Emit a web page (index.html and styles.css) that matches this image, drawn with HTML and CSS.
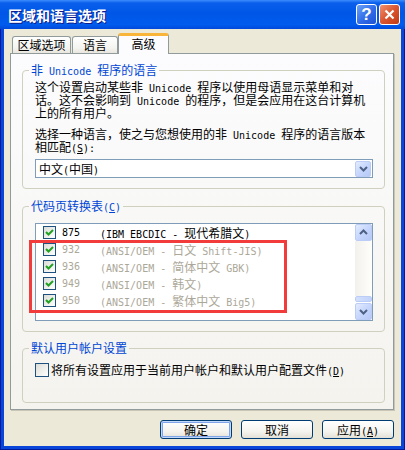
FILE: index.html
```html
<!DOCTYPE html>
<html lang="zh-CN">
<head>
    <meta charset="UTF-8">
    <title>区域和语言选项</title>
    <link rel="stylesheet" href="styles.css">
</head>
<body>
<div class="window">
    <div class="titlebar">
        <span class="title">区域和语言选项</span>
        <div class="cap_btns">
            <span class="cap_btn help">?</span>
            <span class="cap_btn close">
                <svg width="13" height="13" viewBox="0 0 13 13"><path d="M2.5 2.5 L10.5 10.5 M10.5 2.5 L2.5 10.5" stroke="#fff" stroke-width="2.2" fill="none"/></svg>
            </span>
        </div>
    </div>
    <div class="client">
        <div class="tabs">
            <div class="tab tab1">区域选项</div>
            <div class="tab tab2">语言</div>
            <div class="tab active">高级</div>
        </div>
        <div class="panel">
            <fieldset class="group g1">
                <legend>非<span class="en"> Unicode </span>程序的语言</legend>
                <div class="gbody">
                    <p class="desc">这个设置启动某些非<span class="en"> Unicode </span>程序以使用母语显示菜单和对<br>话。这不会影响到<span class="en"> Unicode </span>的程序，但是会应用在这台计算机<br>上的所有用户。</p>
                    <p class="desc">选择一种语言，使之与您想使用的非<span class="en"> Unicode </span>程序的语言版本<br>相匹配<span class="en">(<u>S</u>):</span></p>
                    <div class="combo">
                        <span>中文<span class="en">(</span>中国<span class="en">)</span></span>
                        <span class="combo_btn">
                            <svg width="13" height="13" viewBox="0 0 13 13"><path d="M3 5 L6.5 8.5 L10 5" stroke="#4D6185" stroke-width="2" fill="none"/></svg>
                        </span>
                    </div>
                </div>
            </fieldset>
            <fieldset class="group g2">
                <legend>代码页转换表<span class="en">(<u>C</u>)</span></legend>
                <div class="gbody">
                    <div class="listbox">
                        <div class="rows">
                            <div class="row">
                                <span class="chk"><svg width="11" height="11" viewBox="0 0 11 11"><polyline points="2,5 4.5,7.5 9,3" stroke="#21A121" stroke-width="2" fill="none"/></svg></span>
                                <span class="en num">875</span>
                                <span><span class="en">(IBM EBCDIC - </span>现代希腊文<span class="en">)</span></span>
                            </div>
                            <div class="row off">
                                <span class="chk"><svg width="11" height="11" viewBox="0 0 11 11"><polyline points="2,5 4.5,7.5 9,3" stroke="#21A121" stroke-width="2" fill="none"/></svg></span>
                                <span class="en num">932</span>
                                <span><span class="en">(ANSI/OEM - </span>日文<span class="en"> Shift-JIS)</span></span>
                            </div>
                            <div class="row off">
                                <span class="chk"><svg width="11" height="11" viewBox="0 0 11 11"><polyline points="2,5 4.5,7.5 9,3" stroke="#21A121" stroke-width="2" fill="none"/></svg></span>
                                <span class="en num">936</span>
                                <span><span class="en">(ANSI/OEM - </span>简体中文<span class="en"> GBK)</span></span>
                            </div>
                            <div class="row off">
                                <span class="chk"><svg width="11" height="11" viewBox="0 0 11 11"><polyline points="2,5 4.5,7.5 9,3" stroke="#21A121" stroke-width="2" fill="none"/></svg></span>
                                <span class="en num">949</span>
                                <span><span class="en">(ANSI/OEM - </span>韩文<span class="en">)</span></span>
                            </div>
                            <div class="row off">
                                <span class="chk"><svg width="11" height="11" viewBox="0 0 11 11"><polyline points="2,5 4.5,7.5 9,3" stroke="#21A121" stroke-width="2" fill="none"/></svg></span>
                                <span class="en num">950</span>
                                <span><span class="en">(ANSI/OEM - </span>繁体中文<span class="en"> Big5)</span></span>
                            </div>
                        </div>
                        <div class="scrollbar">
                            <span class="sb_btn">
                                <svg width="13" height="13" viewBox="0 0 13 13"><path d="M3 8 L6.5 4.5 L10 8" stroke="#4D6185" stroke-width="2" fill="none"/></svg>
                            </span>
                            <span class="sb_track"></span>
                            <span class="sb_thumb"></span>
                            <span class="sb_btn">
                                <svg width="13" height="13" viewBox="0 0 13 13"><path d="M3 5 L6.5 8.5 L10 5" stroke="#4D6185" stroke-width="2" fill="none"/></svg>
                            </span>
                        </div>
                    </div>
                </div>
            </fieldset>
            <fieldset class="group g3">
                <legend>默认用户帐户设置</legend>
                <div class="gbody">
                    <div class="opt">
                        <span class="chk empty"></span>
                        <span>将所有设置应用于当前用户帐户和默认用户配置文件<span class="en">(<u>D</u>)</span></span>
                    </div>
                </div>
            </fieldset>
        </div>
        <div class="actions">
            <span class="btn default">确定</span>
            <span class="btn">取消</span>
            <span class="btn">应用<span class="en">(<u>A</u>)</span></span>
        </div>
    </div>
    <div class="mark"></div>
</div>
</body>
</html>
```

FILE: styles.css
```css
*{margin: 0;padding: 0;box-sizing: border-box}
body{
    width: 405px;
    height: 450px;
    overflow: hidden;
    font-family: "Noto Sans CJK SC", "Noto Sans", sans-serif;
    font-size: 12px;
    color: #000;
}
.en{
    font-family: "DejaVu Sans Mono", "Liberation Mono", monospace;
    font-size: 10px;
    line-height: 1;
}
.window{
    position: relative;
    width: 405px;
    height: 450px;
    display: flex;
    flex-direction: column;
    background: #0A45D9;
    box-shadow: inset 1px 0 0 #001A9C, inset -1px 0 0 #001A9C, inset 0 -1px 0 #001A9C;
}
    .titlebar{
        height: 29px;
        display: flex;
        align-items: center;
        justify-content: space-between;
        padding: 0 5px 0 8px;
        background: linear-gradient(#3C8CFB 0, #0A5FEC 3px, #0056E6 45%, #005CEE 85%, #0049DA 100%);
    }
        .title{
            color: #fff;
            font-weight: bold;
            font-size: 14px;
            text-shadow: 1px 1px 0 #0C1B8A;
        }
        .cap_btns{
            display: flex;
            gap: 2px;
        }
        .cap_btn{
            width: 21px;
            height: 21px;
            border: 1px solid #fff;
            border-radius: 3px;
            display: flex;
            align-items: center;
            justify-content: center;
        }
        .help{
            background: linear-gradient(135deg, #6CA2F8, #2F6BE8 55%, #1F52D2);
            color: #fff;
            font-family: "Liberation Sans", sans-serif;
            font-weight: bold;
            font-size: 17px;
        }
        .close{
            background: linear-gradient(135deg, #F09272, #DA5530 50%, #C03A14);
        }
    .client{
        flex: 1;
        margin: 0 4px 4px;
        background: #ECE9D8;
        padding: 4px 7px 0 6px;
    }
        .tabs{
            display: flex;
            align-items: flex-end;
            height: 20px;
            padding-left: 2px;
        }
        .tab{
            height: 17px;
            border: 1px solid #919B9C;
            border-bottom: none;
            border-radius: 3px 3px 0 0;
            background: linear-gradient(#FFFFFF, #F3F3EF 70%, #E8E6DE);
            text-align: center;
            line-height: 16px;
            margin-right: 1px;
        }
        .tab1{width: 59px}
        .tab2{width: 46px}
        .tab.active{
            position: relative;
            z-index: 1;
            width: 51px;
            height: 21px;
            margin: 0 0 -1px -1px;
            background: #FCFCFE;
            border-top: 3px solid #F8B53A;
            line-height: 15px;
        }
        .panel{
            height: 357px;
            border: 1px solid #919B9C;
            box-shadow: 1px 1px 0 #C9C6B7;
            background: linear-gradient(#FCFCFE, #F4F3EE);
            padding: 0 8px 0 11px;
        }
            .group{
                display: block;
                min-width: 0;
                border: 1px solid #D0D0BF;
                border-radius: 4px;
                padding: 0;
            }
            .group legend{
                margin-left: 6px;
                padding: 0 2px;
                line-height: 14px;
                color: #0046D5;
            }
            .g1{margin-top: 9px}
            .g2{margin-top: 10px}
            .g3{margin-top: 9px}
            .g1 .gbody{padding: 3.5px 11px 10px 12px}
            .g2 .gbody{padding: 10px 11px 10px 12px}
            .g3 .gbody{padding: 6px 11px 24px 12px}
            .desc{
                line-height: 12.5px;
                white-space: nowrap;
            }
            .desc + .desc{margin-top: 9px}
            .combo{
                margin-top: 5px;
                height: 19px;
                border: 1px solid #7F9DB9;
                background: #fff;
                display: flex;
                align-items: center;
                justify-content: space-between;
                padding: 0 1px 0 3px;
            }
            .combo_btn, .sb_btn{
                width: 16px;
                height: 16px;
                border: 1px solid #BBCDF6;
                border-radius: 2px;
                background: linear-gradient(135deg, #E3ECFE, #C6D6FC 50%, #B5C9F7);
                display: flex;
                align-items: center;
                justify-content: center;
            }
            .listbox{
                height: 98px;
                display: flex;
                border: 1px solid #7F9DB9;
                background: #fff;
            }
                .rows{flex: 1}
                .row{
                    height: 17px;
                    display: flex;
                    align-items: center;
                    padding-left: 7px;
                    white-space: nowrap;
                }
                .row.off{color: #ACA899}
                .chk{
                    width: 13px;
                    height: 13px;
                    margin-right: 6px;
                    border: 1px solid #1C5180;
                    background: linear-gradient(135deg, #DCDCD7, #FFFFFF);
                    display: flex;
                    align-items: center;
                    justify-content: center;
                }
                .num{
                    display: inline-block;
                    width: 38px;
                }
                .scrollbar{
                    width: 17px;
                    display: flex;
                    flex-direction: column;
                }
                .sb_btn{
                    width: 17px;
                    height: 17px;
                }
                .sb_track{
                    flex: 1;
                    background: linear-gradient(90deg, #F3F1EC, #FEFEFB);
                }
                .sb_thumb{
                    height: 6px;
                    margin-bottom: 1px;
                    border: 1px solid #BBCDF6;
                    border-radius: 2px;
                    background: linear-gradient(90deg, #D3E0FD, #C1D3FB);
                }
            .opt{
                display: flex;
                align-items: center;
                white-space: nowrap;
            }
            .opt .chk{
                width: 14px;
                height: 14px;
                margin-right: 2px;
            }
        .actions{
            display: flex;
            justify-content: flex-end;
            gap: 9px;
            margin-top: 10px;
        }
        .btn{
            width: 72px;
            height: 19px;
            border: 1px solid #003C74;
            border-radius: 3px;
            background: linear-gradient(#FFFFFF, #F5F4EF 60%, #E3E0D6);
            text-align: center;
            line-height: 17px;
        }
        .btn.default{
            box-shadow: inset 0 0 0 1px #C2D8FB, inset 0 0 0 2px #7FA4E8;
        }
    .mark{
        position: absolute;
        left: 29px;
        top: 240px;
        width: 258px;
        height: 73px;
        border: 3px solid #F23B3B;
    }
```
